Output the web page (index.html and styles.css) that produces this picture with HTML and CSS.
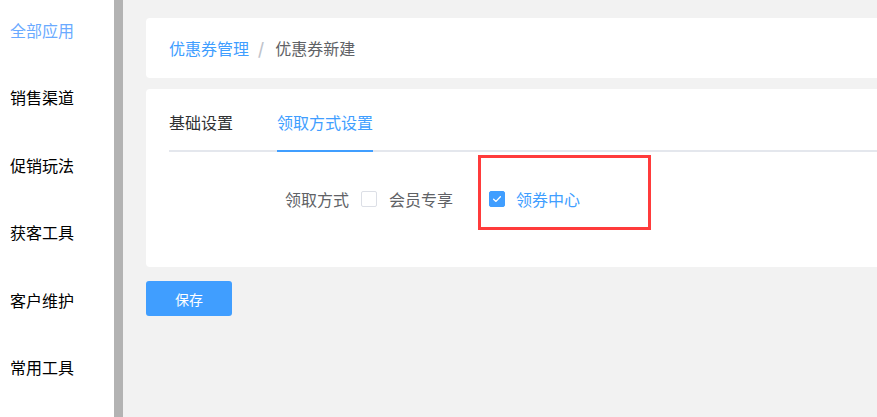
FILE: index.html
```html
<!DOCTYPE html>
<html lang="zh">
<head>
<meta charset="utf-8">
<title>优惠券新建</title>
<link rel="stylesheet" href="styles.css">
</head>
<body>
<div class="app">
  <aside class="sidebar">
    <ul class="menu">
      <li class="menu-item active">全部应用</li>
      <li class="menu-item">销售渠道</li>
      <li class="menu-item">促销玩法</li>
      <li class="menu-item">获客工具</li>
      <li class="menu-item">客户维护</li>
      <li class="menu-item">常用工具</li>
    </ul>
  </aside>
  <div class="divider"></div>
  <main class="main">
    <div class="card crumbs">
      <span class="crumb-link">优惠券管理</span>
      <span class="crumb-sep">/</span>
      <span class="crumb-current">优惠券新建</span>
    </div>
    <div class="card panel">
      <div class="tabs">
        <div class="tab">基础设置</div>
        <div class="tab active">领取方式设置</div>
      </div>
      <div class="form-row">
        <span class="form-label">领取方式</span>
        <label class="checkbox">
          <span class="box"></span>
          <span class="check-label">会员专享</span>
        </label>
        <label class="checkbox checked">
          <span class="box">
            <svg viewBox="0 0 16 16" width="16" height="16"><path d="M4.6 8.2 L7 10.4 L11.4 5.8" fill="none" stroke="#fff" stroke-width="1.3" stroke-linecap="round" stroke-linejoin="round"/></svg>
          </span>
          <span class="check-label">领券中心</span>
          <span class="highlight"></span>
        </label>
      </div>
    </div>
    <div class="actions">
      <button class="btn-primary">保存</button>
    </div>
  </main>
</div>
</body>
</html>
```
FILE: styles.css
```css
* { box-sizing: border-box; }
html, body {
  margin: 0;
  padding: 0;
  height: 100%;
  overflow: hidden;
}
body {
  font-family: "Noto Sans CJK SC", "Noto Sans", sans-serif;
  background: #f2f2f2;
}
.app {
  display: flex;
  height: 417px;
}
.sidebar {
  width: 114px;
  flex: none;
  background: #fff;
}
.menu {
  list-style: none;
  margin: 0;
  padding: 20px 0 0 10px;
  display: flex;
  flex-direction: column;
  gap: 47.4px;
}
.menu-item {
  font-size: 16px;
  line-height: 20px;
  color: #000;
}
.menu-item.active {
  color: #6aaaff;
}
.divider {
  width: 9px;
  flex: none;
  background: #b3b3b3;
}
.main {
  flex: 1;
  padding: 18px 0 0 23px;
  margin-right: -12px;
  display: flex;
  flex-direction: column;
}
.card {
  background: #fff;
  border-radius: 4px;
}
.crumbs {
  height: 60px;
  display: flex;
  align-items: center;
  padding-left: 23px;
  font-size: 16px;
}
.crumb-link { color: #409eff; }
.crumb-sep {
  color: #c0c4cc;
  font-weight: bold;
  margin: 0 11px 0 9px;
}
.crumb-current { color: #606266; }
.panel {
  margin-top: 11px;
  padding: 22px 0 57px 23px;
}
.tabs {
  display: flex;
  gap: 44px;
  border-bottom: 2px solid #e4e7ed;
}
.tab {
  font-size: 16px;
  line-height: 22px;
  padding-bottom: 17px;
  color: #303133;
  margin-bottom: -2px;
  border-bottom: 2px solid transparent;
}
.tab.active {
  color: #409eff;
  border-bottom-color: #409eff;
}
.form-row {
  display: flex;
  align-items: center;
  margin-top: 36px;
  padding-left: 116px;
  height: 22px;
  font-size: 16px;
}
.form-label {
  color: #606266;
  margin-right: 12px;
}
.checkbox {
  display: flex;
  align-items: center;
  position: relative;
  color: #606266;
}
.checkbox + .checkbox {
  margin-left: 36px;
}
.box {
  width: 16px;
  height: 16px;
  border: 1px solid #dcdfe6;
  border-radius: 2px;
  background: #fff;
  display: flex;
  align-items: center;
  justify-content: center;
  margin-right: 12px;
}
.checked .box {
  border-color: #409eff;
  background: #409eff;
  margin-right: 11px;
}
.checked .box svg { display: block; flex: none; }
.checked .check-label { color: #409eff; }
.highlight {
  position: absolute;
  left: -11px;
  top: -32px;
  width: 173px;
  height: 75px;
  border: 3px solid #ff3b3b;
  pointer-events: none;
}
.actions {
  margin-top: 14px;
}
.btn-primary {
  width: 86px;
  height: 35px;
  border: none;
  border-radius: 3px;
  background: #409eff;
  color: #fff;
  font-family: inherit;
  font-size: 14px;
  padding: 0;
}
```
